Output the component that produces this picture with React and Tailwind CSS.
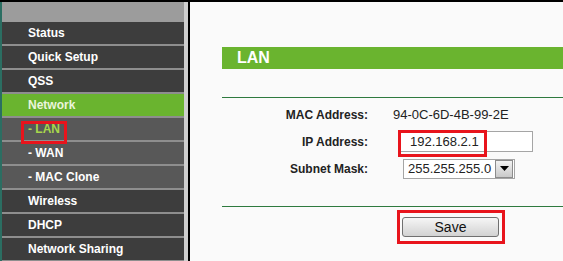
import React from 'react'

const menu = [
  { label: 'Status' },
  { label: 'Quick Setup' },
  { label: 'QSS' },
  { label: 'Network', active: true },
  { label: '- LAN', sub: true, current: true },
  { label: '- WAN', sub: true },
  { label: '- MAC Clone', sub: true },
  { label: 'Wireless' },
  { label: 'DHCP' },
  { label: 'Network Sharing' },
]

const MenuItem = ({ item }) => {
  let bg = 'bg-[#3d3d3d]'
  if (item.active) bg = 'bg-[#6ab42f]'
  else if (item.sub) bg = 'bg-[#585858]'
  return (
    <div className={`h-[24px] shrink-0 border-b-2 border-[#8e8e8e] ${bg} flex items-center pl-[26px]`}>
      <span
        className={`text-[12px] font-bold leading-none ${
          item.current ? 'text-[#a8d64c]' : item.active ? 'text-[#eaf5dc]' : 'text-white'
        }`}
      >
        {item.label}
      </span>
    </div>
  )
}

const App = () => {
  return (
    <div className="relative w-[563px] h-[261px] overflow-hidden border-t-2 border-black bg-[#fafafa] font-['Liberation_Sans',Arial,sans-serif]">
      <div className="flex h-full">
        {/* sidebar */}
        <div className="w-[184px] shrink-0 border-l-2 border-[#2b6e62] flex flex-col bg-[#3d3d3d]">
          <div className="h-[20px] shrink-0 bg-[#9c9c9c]" />
          {menu.map((m) => (
            <MenuItem key={m.label} item={m} />
          ))}
        </div>
        <div className="w-[4px] shrink-0 bg-[#cfcfcf]" />
        <div className="w-[2px] shrink-0 bg-black" />

        {/* content */}
        <div className="flex-1 flex flex-col pl-[32px]">
          <div className="mt-[45px] h-[22px] bg-[#6ab42f] flex items-center pl-[15px]">
            <span className="text-white text-[16px] font-bold leading-none">LAN</span>
          </div>
          <div className="mt-[28px] h-px bg-[#2e7a3e]" />

          <div className="mt-[7px] h-[20px] flex items-center">
            <div className="w-[146px] text-right text-[12px] font-bold text-[#222]">MAC Address:</div>
            <div className="ml-[25px] text-[13px] text-[#222]">94-0C-6D-4B-99-2E</div>
          </div>

          <div className="mt-[6px] h-[21px] flex items-center">
            <div className="w-[146px] text-right text-[12px] font-bold text-[#222]">IP Address:</div>
            <div className="ml-[32px] w-[133px] h-[21px] border border-[#a5a5a5] bg-white flex items-center pl-[9px] text-[13px] text-[#222]">
              192.168.2.1
            </div>
          </div>

          <div className="mt-[6px] h-[21px] flex items-center">
            <div className="w-[146px] text-right text-[12px] font-bold text-[#222]">Subnet Mask:</div>
            <div className="ml-[35px] w-[112px] h-[20px] border border-[#a5a5a5] bg-white flex items-center">
              <span className="flex-1 pl-[4px] text-[13px] text-[#222] leading-none">255.255.255.0</span>
              <div className="w-[18px] h-[18px] mr-px border border-[#8c8c8c] bg-gradient-to-b from-[#f2f2f2] to-[#c9c9c9] flex items-center justify-center">
                <svg width="9" height="5" viewBox="0 0 9 5">
                  <path d="M0 0 L9 0 L4.5 5 Z" fill="#000" />
                </svg>
              </div>
            </div>
          </div>

          <div className="mt-[27px] h-px bg-[#2e7a3e]" />

          <div className="mt-[10px] flex">
            <button className="ml-[180px] w-[97px] h-[20px] rounded-[3px] border border-[#707070] bg-gradient-to-b from-[#f6f6f6] to-[#d2d2d2] text-[14px] text-[#111] leading-none">
              Save
            </button>
          </div>
        </div>
      </div>

      {/* red annotation boxes */}
      <div className="absolute left-[21px] top-[119px] w-[46px] h-[23px] border-[3px] border-[#e8141c]" />
      <div className="absolute left-[398px] top-[128px] w-[89px] h-[27px] border-[3px] border-[#e8141c]" />
      <div className="absolute left-[397px] top-[208px] w-[108px] h-[34px] border-[3px] border-[#e8141c]" />
    </div>
  )
}

export default App
